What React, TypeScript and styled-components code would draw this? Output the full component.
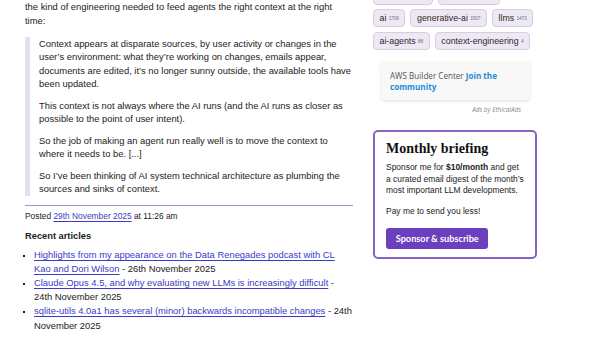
import styled, { createGlobalStyle } from 'styled-components';

const GlobalStyle = createGlobalStyle`
  html, body {
    margin: 0;
    padding: 0;
    background: #ffffff;
    overflow: hidden;
  }
  body {
    font-family: "Liberation Sans", Arial, Helvetica, sans-serif;
    color: #222;
  }
`;

const Page = styled.div`
  display: grid;
  grid-template-columns: 328px 164px;
  column-gap: 20px;
  padding-left: 25px;
  align-items: start;
`;

const Main = styled.main`
  font-size: 9.4px;
  line-height: 13.5px;
  padding-top: 0.25px;
`;

const Para = styled.p`
  margin: 0;
`;

const Quote = styled.blockquote`
  margin: 9.5px 0 0;
  padding-left: 9px;
  border-left: 5px solid #e6dff0;

  p + p {
    margin-top: 8px;
  }
`;

const PostMeta = styled.div`
  margin-top: 8.75px;
  padding-top: 4px;
  border-top: 1px solid #a88ed6;
  font-size: 8.4px;
  line-height: 12px;
`;

const Link = styled.a`
  color: #3b3bc4;
  text-decoration: underline;
  text-underline-offset: 1.5px;
  text-decoration-thickness: 1px;
`;

const SectionHeading = styled.h3`
  margin: 8px 0 0;
  font-size: 9.3px;
  line-height: 13.5px;
  font-weight: 700;
`;

const ArticleList = styled.ul`
  margin: 4.5px 0 0;
  padding-left: 9px;
  list-style: square;
  line-height: 14.2px;

  li::marker {
    font-size: 8px;
  }
`;

const Sidebar = styled.aside`
  display: flex;
  flex-direction: column;
`;

const TagList = styled.div`
  display: flex;
  flex-wrap: wrap;
  gap: 4.8px 5.3px;
  margin: -13.3px 3px 0 0;
`;

const Tag = styled.a<{ $minWidth?: number }>`
  display: inline-flex;
  align-items: center;
  height: 17.8px;
  min-width: ${(p) => (p.$minWidth ? `${p.$minWidth}px` : 'auto')};
  box-sizing: border-box;
  padding: 0 5.5px;
  border: 1px solid #d6cde2;
  border-radius: 4px;
  background: #eee8f4;
  color: #2a2a2a;
  font-size: 8.8px;
  text-decoration: none;
`;

const TagCount = styled.span`
  margin-left: 2.4px;
  font-size: 5px;
  letter-spacing: -0.3px;
  color: #777;
`;

const AdBox = styled.div`
  margin: 12px 7px 0 7.7px;
  padding: 8px 9.3px;
  background: #f8f8f8;
  border-radius: 3px;
  box-shadow: 0 1px 3px rgba(0, 0, 0, 0.13);
  font-family: "Open Sans", "Liberation Sans", sans-serif;
  font-size: 8.1px;
  line-height: 11.3px;
  color: #555;
`;

const AdLink = styled.a`
  color: #1f8bd3;
  font-weight: 700;
  text-decoration: none;
`;

const AdCredit = styled.div`
  margin-top: 6px;
  padding-right: 16px;
  text-align: right;
  font-family: "Open Sans", "Liberation Sans", sans-serif;
  font-style: italic;
  font-size: 6.4px;
  line-height: 8px;
  color: #888;
`;

const Briefing = styled.section`
  margin-top: 15.3px;
  padding: 8px 9.5px 8px 11px;
  border: 2px solid #8465c4;
  border-radius: 5px;
  font-size: 8.45px;
  line-height: 11.65px;
`;

const BriefingTitle = styled.h2`
  margin: 0;
  font-family: "Liberation Serif", Georgia, serif;
  font-weight: 700;
  font-size: 14px;
  line-height: 17px;
  color: #111;
`;

const BriefingText = styled.p`
  margin: 5.3px 0 0;

  & + & {
    margin-top: 9px;
  }
`;

const SponsorButton = styled.button`
  margin-top: 10px;
  height: 21.6px;
  padding: 0 9.7px;
  border: none;
  border-radius: 3px;
  background: #6b3fbd;
  color: #fff;
  font-family: Lato, "Liberation Sans", sans-serif;
  font-weight: 700;
  font-size: 9.2px;
  cursor: pointer;
`;

const tags = [
  { name: 'definitions', count: 42, minWidth: 58.7 },
  { name: 'ai-ethics', count: 254, minWidth: 62 },
  { name: 'ai', count: 1706 },
  { name: 'generative-ai', count: 1507 },
  { name: 'llms', count: 1473 },
  { name: 'ai-agents', count: 88 },
  { name: 'context-engineering', count: 4 },
];

const articles = [
  {
    title: 'Highlights from my appearance on the Data Renegades podcast with CL Kao and Dori Wilson',
    date: '26th November 2025',
  },
  {
    title: 'Claude Opus 4.5, and why evaluating new LLMs is increasingly difficult',
    date: '24th November 2025',
  },
  {
    title: 'sqlite-utils 4.0a1 has several (minor) backwards incompatible changes',
    date: '24th November 2025',
  },
];

export default function App() {
  return (
    <>
      <GlobalStyle />
      <Page>
        <Main>
          <Para>
            the kind of engineering needed to feed agents the right context at the right
            time:
          </Para>
          <Quote>
            <Para>
              Context appears at disparate sources, by user activity or changes in the
              user’s environment: what they’re working on changes, emails appear,
              documents are edited, it’s no longer sunny outside, the available tools have
              been updated.
            </Para>
            <Para>
              This context is not always where the AI runs (and the AI runs as closer as
              possible to the point of user intent).
            </Para>
            <Para>
              So the job of making an agent run really well is to move the context to
              where it needs to be. [...]
            </Para>
            <Para>
              So I’ve been thinking of AI system technical architecture as plumbing the
              sources and sinks of context.
            </Para>
          </Quote>
          <PostMeta>
            Posted <Link href="#">29th November 2025</Link> at 11:26 am
          </PostMeta>
          <SectionHeading>Recent articles</SectionHeading>
          <ArticleList>
            {articles.map((a) => (
              <li key={a.title}>
                <Link href="#">{a.title}</Link> - {a.date}
              </li>
            ))}
          </ArticleList>
        </Main>

        <Sidebar>
          <TagList>
            {tags.map((t) => (
              <Tag key={t.name} href="#" $minWidth={t.minWidth}>
                {t.name}
                <TagCount>{t.count}</TagCount>
              </Tag>
            ))}
          </TagList>
          <AdBox>
            AWS Builder Center <AdLink href="#">Join the community</AdLink>
          </AdBox>
          <AdCredit>Ads by EthicalAds</AdCredit>
          <Briefing>
            <BriefingTitle>Monthly briefing</BriefingTitle>
            <BriefingText>
              Sponsor me for <strong>$10/month</strong> and get a curated email digest of
              the month’s most important LLM developments.
            </BriefingText>
            <BriefingText>Pay me to send you less!</BriefingText>
            <SponsorButton>Sponsor &amp; subscribe</SponsorButton>
          </Briefing>
        </Sidebar>
      </Page>
    </>
  );
}
